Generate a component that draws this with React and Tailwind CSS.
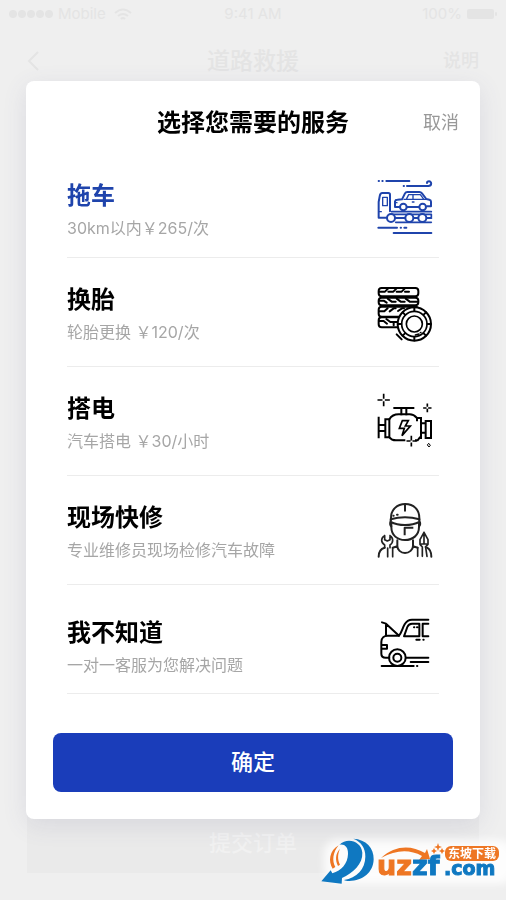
import { useState } from "react";

function TowIcon() {
  return (
    <svg viewBox="30 43 180 180" className="h-15 w-15 overflow-visible" fill="none" stroke="currentColor" strokeWidth="6" strokeLinecap="round" strokeLinejoin="round">
      <path d="M41 46h1M52 46h1M64 46h69M116 61h1M126 61h64c11 0 11-14 2-14-4 0-6 2-6 5" />
      <path d="M75 137V87q0-5-5-5H52c-6 0-7 4-8 10l-3 17v47h24M91 157h28M147 157h11M186 157h13" />
      <path d="M53 95h14v25H53zM43 138h6" strokeWidth="4" />
      <path d="M80 138h119M77 146h122v7M92 170h107" strokeWidth="5" />
      <circle cx="78" cy="157" r="12" fill="white" />
      <circle cx="133" cy="157" r="12" fill="white" />
      <circle cx="172" cy="157" r="12" fill="white" />
      <path d="M104 124H90v-17q1-5 7-5l14-1 9-18q2-4 7-4h36q5 0 8 4l13 17 9 2q5 1 5 6v14h-12M126 124h35" />
      <path d="M117 101h66M125 99l6-12h35l9 12M144 87v13M142 109h5M91 111h5" strokeWidth="4" />
      <circle cx="115" cy="124" r="10" fill="white" />
      <circle cx="173" cy="124" r="10" fill="white" />
      <path d="M40 186h56M107 186h1M118 186h6M86 202h113" />
    </svg>
  );
}

function TireIcon() {
  return (
    <svg viewBox="30 27 180 180" className="h-15 w-15 overflow-visible" fill="none" stroke="currentColor" strokeWidth="6" strokeLinecap="round" strokeLinejoin="round">
      <path d="M50 39h101q9 0 9 9v7q0 9-9 9H50q-9 0-9-9v-7q0-9 9-9z" />
      <path d="M50 68h101q9 0 9 9v5q0 9-9 9H50q-9 0-9-9v-5q0-9 9-9z" />
      <path d="M106 125H50q-9 0-9-9v-12q0-9 9-9h101q6 0 8 4" />
      <path d="M98 157H50q-9 0-9-9v-12q0-9 9-9h50" />
      <path d="M42 50h18l9-9M70 50h15l9-9M95 50h15l9-9M120 50h12" />
      <path d="M42 77h14l9 6M68 71l12 9h12M95 71l12 9h12M122 71l12 9h24" />
      <path d="M42 109h16l10-9M74 109l12-9h6M99 108l12-8h6" />
      <path d="M42 138h14l10 8M64 132l12 9h20M86 141v10" />
      <circle cx="148" cy="147" r="50" fill="white" />
      <circle cx="148" cy="147" r="38" strokeWidth="5" />
      <circle cx="148" cy="147" r="24" strokeWidth="5" />
      <path d="M148 98v10M148 186v10M99 147h10M187 147h10M113 112l7 7M176 175l7 7M183 112l-7 7M120 175l-7 7" />
      <path d="M151 180l11-3M166 173l2-1" strokeWidth="4" />
      <path d="M95 178l15 15" />
    </svg>
  );
}

function EngineIcon() {
  return (
    <svg viewBox="30 24 180 180" className="h-15 w-15 overflow-visible" fill="none" stroke="currentColor" strokeWidth="5" strokeLinecap="square" strokeLinejoin="miter">
      <path d="M56 29v10M56 51v10M40 45h10M62 45h10M187 58v5M187 74v5M177 69h5M192 69h5" />
      <path d="M88 69h57M109 71v17M124 71v17" strokeWidth="6" />
      <path d="M73 103q9-15 28-15h33q12 0 22 11M73 157q7 9 20 9h25M153 166h5l6-8" strokeWidth="6" />
      <path d="M61 103h12v54H61zM41 98v59M43 120h17M43 138h17" strokeWidth="6" />
      <path d="M156 106v-7h12v60M169 115h12M169 143h12M182 108h16v51h-16z" strokeWidth="6" />
      <path d="M112 107h18l-9 16h15l-25 29 7-22h-15z" />
      <path d="M139 155v9M139 175v7M127 168h7M145 168h8" />
      <path d="M192 176l4 5-4 5-4-5z" strokeWidth="3" />
    </svg>
  );
}

function RepairmanIcon() {
  return (
    <svg viewBox="30 36 180 180" className="h-15 w-15 overflow-visible text-[#222]" fill="none" stroke="currentColor" strokeWidth="6" strokeLinecap="round" strokeLinejoin="round">
      <path d="M78 90v-6c0-25 18-42 43-42s42 17 42 42v6" />
      <path d="M77 88c27-8 59-8 86 0v8c-24 12-62 12-86 0zM120 43v19M85 77h1M96 74h2" />
      <path d="M79 99v12c0 25 18 39 41 39s42-14 42-39V99" />
      <path d="M76 97q-2 9 3 12M165 97q2 9-3 12" />
      <path d="M119 133v-20h23" strokeLinecap="square" />
      <path d="M97 151v17c0 11 10 21 23 21s24-10 24-21v-17M97 169l-14 4M144 169l14 4" />
      <path d="M41 200c0-15 7-24 18-27M199 200c0-15-5-23-13-27" />
      <path d="M59 137c-6 3-9 8-9 14 0 7 4 11 9 14v8M75 137c5 3 8 8 8 14 0 7-3 11-8 14v8M59 137v12l8 4 8-4v-12M68 174v26M83 174v26" strokeWidth="5" />
      <path d="M177 127l-12 22v14l7 8M177 127l12 22v14l-8 8M177 127v34M169 162h16M158 173v26M172 172v27M182 172l4 27" strokeWidth="5" />
    </svg>
  );
}

function CarIcon() {
  return (
    <svg viewBox="30 34 180 180" className="h-15 w-15 overflow-visible" fill="none" stroke="currentColor" strokeWidth="6" strokeLinecap="round" strokeLinejoin="round">
      <path d="M51 50l12 4 39 36c8-9 10-22 17-34 5-9 12-14 22-14h49M63 54v35" />
      <path d="M73 156H62c-9 0-13-5-13-12v-35c0-13 9-19 19-19h34" />
      <path d="M117 92l10-28q4-10 14-10h22v38zM190 54h-17v38h17M147 65h1M156 65h1M154 102h10M175 102h1" />
      <path d="M51 118h15v11H51" />
      <circle cx="97" cy="156" r="25" />
      <circle cx="97" cy="156" r="12" />
      <path d="M123 156h67M137 169h53M50 181h96M156 181h1" />
    </svg>
  );
}

const services = [
  { id: "tow", name: "拖车", desc: "30km以内￥265/次", Icon: TowIcon, pad: "pt-[31px] pb-[17px]" },
  { id: "tire", name: "换胎", desc: "轮胎更换 ￥120/次", Icon: TireIcon, pad: "pt-[26px] pb-[22px]" },
  { id: "power", name: "搭电", desc: "汽车搭电 ￥30/小时", Icon: EngineIcon, pad: "pt-[26px] pb-[22px]" },
  { id: "repair", name: "现场快修", desc: "专业维修员现场检修汽车故障", Icon: RepairmanIcon, pad: "pt-[26px] pb-[22px]" },
  { id: "unknown", name: "我不知道", desc: "一对一客服为您解决问题", Icon: CarIcon, pad: "pt-8 pb-4" },
];

function StatusBar() {
  return (
    <div className="grid h-7 grid-cols-3 items-center px-2 text-[15px]">
      <div className="flex items-center gap-1">
        <svg viewBox="0 0 46 10" className="h-[10px] w-[46px]" fill="currentColor">
          <circle cx="5" cy="5" r="4" />
          <circle cx="14" cy="5" r="4" />
          <circle cx="23" cy="5" r="4" />
          <circle cx="32" cy="5" r="4" />
          <circle cx="41" cy="5" r="4" />
        </svg>
        <span>Mobile</span>
        <svg viewBox="0 0 18 13" className="ml-1 h-[13px] w-[18px]" fill="none" stroke="currentColor" strokeWidth="2">
          <path d="M1 5q8-7 16 0M4 8q5-4 10 0M7 11q2-2 4 0" />
        </svg>
      </div>
      <span className="text-center">9:41 AM</span>
      <div className="flex items-center justify-end gap-1">
        <span>100%</span>
        <svg viewBox="0 0 32 12" className="h-3 w-8" fill="currentColor">
          <rect x="1" y="1" width="27" height="10" rx="2" />
          <rect x="29" y="4" width="2" height="4" rx="1" />
        </svg>
      </div>
    </div>
  );
}

function Watermark() {
  return (
    <svg viewBox="0 0 196 80" className="fixed right-0 bottom-0 h-20 w-49">
      <defs>
        <filter id="glow" x="-20%" y="-30%" width="140%" height="160%">
          <feGaussianBlur stdDeviation="4" />
        </filter>
      </defs>
      <rect x="14" y="20" width="190" height="44" rx="14" fill="white" opacity="0.85" filter="url(#glow)" />
      {/* round arrow */}
      <g transform="translate(6 12) scale(0.3333)">
        <path d="M68 40C40 56 36 88 50 110l8-5C48 86 50 62 68 40z" fill="#ee7623" />
        <path d="M72 50C58 65 57 84 66 102l6-4C64 82 65 66 72 50z" fill="#ee7623" />
        <path d="M70 38C95 15 136 28 139 62c2 34-28 60-61 76l-1 17-61-7 28-33 5 9c28-9 46-29 47-58 1-21-10-31-26-28z" fill="#0f78c1" />
        <path d="M112 20c38 2 62 28 61 62-1 40-33 64-73 65-8 0-12-1-16-3 38-6 64-34 64-70 0-26-12-44-36-54z" fill="#0f78c1" />
      </g>
      {/* swoosh over the name */}
      <path d="M71 38C85 25 101 25 115 33l2-4 3 10-11 1 3-4c-13-7-26-6-41 2z" fill="#ee7623" />
      <path d="M128 23l1 3 3 1-3 1-1 3-1-3-3-1 3-1zM124 28l1 2 2 1-2 1-1 2-1-2-2-1 2-1zM132 28l1 2 2 1-2 1-1 2-1-2-2-1 2-1z" fill="#ee7623" />
      <text x="67" y="55" fontFamily="'DejaVu Sans', sans-serif" fontWeight="700" fontSize="27" stroke="#ee7623" strokeWidth="1" fill="#ee7623">
        uz<tspan fill="#0f78c1" stroke="#0f78c1">zf</tspan>
      </text>
      <text x="134" y="55" fontFamily="'DejaVu Sans', sans-serif" fontWeight="700" fontSize="19" stroke="#0f78c1" strokeWidth="1" fill="#0f78c1">
        .com
      </text>
      <rect x="135" y="26" width="54" height="15" rx="6" fill="#ee7623" />
      <text x="138" y="38" fontFamily="'Noto Sans CJK SC', sans-serif" fontWeight="700" fontSize="12" fill="white">
        东坡下载
      </text>
    </svg>
  );
}

export default function App() {
  const [selected, setSelected] = useState("tow");

  return (
    <div className="font-[Inter,'Noto_Sans_CJK_SC',sans-serif]">
      {/* page behind the dialog */}
      <div className="flex min-h-screen flex-col bg-[#efefef] text-[#e4e4e4]">
        <StatusBar />
        <header className="grid h-[66px] grid-cols-3 items-center px-[27px]">
          <button type="button" className="justify-self-start">
            <svg viewBox="0 0 12 20" className="h-5 w-3" fill="none" stroke="currentColor" strokeWidth="2">
              <path d="M11 1L2 10l9 9" />
            </svg>
          </button>
          <h1 className="text-center text-[23px] font-medium">道路救援</h1>
          <button type="button" className="justify-self-end text-lg font-medium">说明</button>
        </header>
        <div className="mt-auto px-[27px] pb-[27px]">
          <button type="button" className="h-[60px] w-full bg-[#eaeaea] text-[22px] font-medium text-[#f1f1f1]">
            提交订单
          </button>
        </div>
      </div>

      {/* ---------------- Service dialog ---------------- */}
      <div className="fixed inset-0 overflow-y-auto px-[26px] pt-[81px]">
        <div role="dialog" className="rounded-lg bg-white pb-[27px] shadow-[0_6px_24px_rgba(80,80,130,0.12)]">
          <div className="grid h-[68px] grid-cols-[1fr_auto_1fr] items-center px-[21px] pt-4">
            <h2 className="col-start-2 text-2xl font-semibold text-black">选择您需要的服务</h2>
            <button type="button" className="justify-self-end text-lg text-[#999]">取消</button>
          </div>

          <ul className="px-[41px]">
            {services.map(({ id, name, desc, Icon, pad }) => (
              <li key={id} className="border-b border-[#ececec]">
                <button
                  type="button"
                  onClick={() => setSelected(id)}
                  className={`flex w-full items-center justify-between pr-1 text-left ${pad} ${selected === id ? "text-[#1f44ac]" : "text-black"}`}
                >
                  <span>
                    <span className="block text-2xl leading-8 font-semibold">{name}</span>
                    <span className="mt-1 block text-base leading-6 text-[#a6a6a6]">{desc}</span>
                  </span>
                  <Icon />
                </button>
              </li>
            ))}
          </ul>

          <div className="px-[27px] pt-[39px]">
            <button type="button" className="h-[59px] w-full rounded-lg bg-[#1a3dba] text-[22px] font-medium text-white">
              确定
            </button>
          </div>
        </div>
      </div>

      <Watermark />
    </div>
  );
}
